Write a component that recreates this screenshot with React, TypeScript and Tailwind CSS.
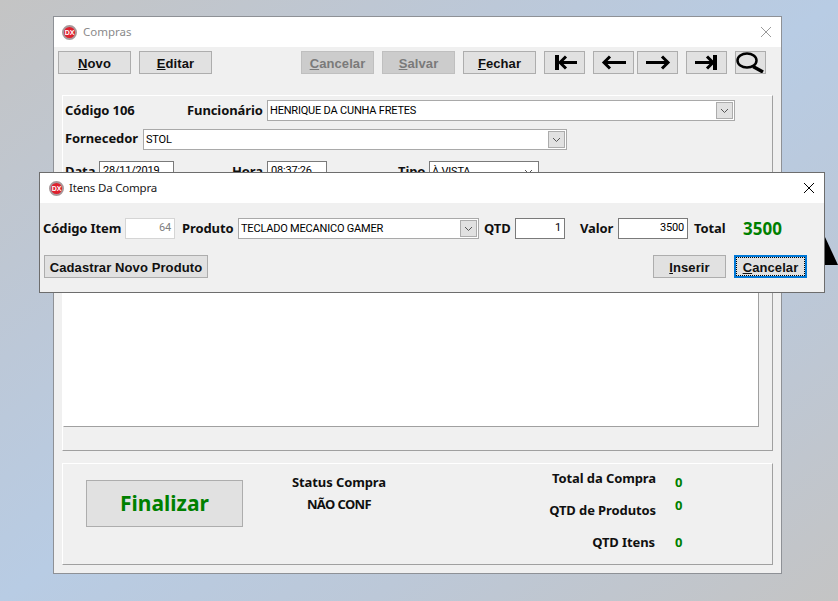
const label = "font-['Noto_Sans',sans-serif] font-bold text-[13px] tracking-[-0.1px] leading-none text-[#101010] whitespace-nowrap";
const field = "font-['Roboto',sans-serif] text-[11px] tracking-[-0.2px] whitespace-nowrap";

function DxIcon() {
  return (
    <span className="flex h-[15px] w-[15px] shrink-0 items-center justify-center rounded-full border-2 border-[#a8989a] bg-[#e0202e] font-['Liberation_Sans',sans-serif] text-[7px] font-bold leading-none text-white">
      DX
    </span>
  );
}

function Btn({ hot, rest, w = "w-[73px]", off = false, focus = false }: { hot: string; rest: string; w?: string; off?: boolean; focus?: boolean }) {
  const look = off
    ? "border border-[#bfbfbf] bg-[#cccccc] text-[#7a7a7a]"
    : focus
      ? "border-2 border-[#0078d7] bg-[#e1e1e1] text-[#101010]"
      : "border border-[#adadad] bg-[#e1e1e1] text-[#101010]";
  return (
    <button className={`relative flex h-[23px] shrink-0 items-center justify-center pt-[2px] font-['Liberation_Sans',sans-serif] text-[13px] font-bold tracking-[0.1px] ${w} ${look}`}>
      {focus && <span className="absolute inset-0 border border-dotted border-black" />}
      <span className="underline">{hot}</span>
      {rest}
    </button>
  );
}

function NavBtn({ w = "w-[41px]", children }: { w?: string; children: React.ReactNode }) {
  return (
    <button className={`flex h-[23px] shrink-0 items-center justify-center border border-[#adadad] bg-[#e1e1e1] ${w}`}>
      {children}
    </button>
  );
}

function ArrowIcon({ d, bar }: { d: string; bar?: number }) {
  return (
    <svg width="39" height="21" viewBox="0 0 39 21" fill="none">
      <path d={d} stroke="#000" strokeWidth="3" strokeLinejoin="miter" />
      {bar !== undefined && <rect x={bar} y="3" width="4" height="15" fill="#000" />}
    </svg>
  );
}

function Combo({ text, w, border = "border-[#a9a9a9]", flat = false }: { text: string; w: string; border?: string; flat?: boolean }) {
  return (
    <div className={`flex h-[21px] shrink-0 items-center justify-between border bg-white pl-[2px] pr-[1px] text-black ${w} ${border} ${field}`}>
      <span className="pt-[2px]">{text}</span>
      <span className={`flex h-[17px] w-[17px] items-center justify-center ${flat ? "" : "border border-[#acacac] bg-[#e1e1e1]"}`}>
        <svg width="9" height="6" viewBox="0 0 9 6" fill="none">
          <path d="M1 1l3.5 3.5L8 1" stroke="#555" strokeWidth="1" />
        </svg>
      </span>
    </div>
  );
}

function Input({ text, w, border = "border-[#7a7a7a]", color = "text-black", left = false }: { text: string; w: string; border?: string; color?: string; left?: boolean }) {
  return (
    <div className={`flex h-[21px] shrink-0 items-center border bg-white px-[3px] ${left ? "justify-start" : "justify-end"} ${w} ${border} ${field} ${color}`}>
      {text}
    </div>
  );
}

export default function App() {
  return (
    <div className="relative h-[601px] w-[838px] overflow-hidden bg-[linear-gradient(to_bottom_right,#c4c4c4_0%,#bcc8d8_30%,#b8cce4_50%,#bcc8d8_72%,#c4c4c4_100%)]">
      {/* black corner of the desktop picture */}
      <svg className="absolute left-[825px] top-[237px]" width="13" height="28" viewBox="0 0 13 28">
        <path d="M0 0L13 28H0z" fill="#000" />
      </svg>

      {/* Compras window */}
      <div className="absolute left-[53px] top-[16px] flex h-[558px] w-[729px] flex-col border border-[#8e9196] bg-[#f0f0f0]">
        <div className="flex h-[30px] shrink-0 items-center bg-white pl-[8px] pr-[9px]">
          <DxIcon />
          <span className="ml-[6px] font-['Noto_Sans',sans-serif] text-[11.5px] text-[#8a8a8a]">Compras</span>
          <svg className="ml-auto" width="12" height="12" viewBox="0 0 12 12" fill="none">
            <path d="M1 1l10 10M11 1L1 11" stroke="#9a9a9a" strokeWidth="1" />
          </svg>
        </div>

        <div className="flex pl-[4px] pt-[4px]">
          <Btn hot="N" rest="ovo" />
          <div className="ml-[8px]"><Btn hot="E" rest="ditar" /></div>
          <div className="ml-[89px]"><Btn hot="C" rest="ancelar" off /></div>
          <div className="ml-[8px]"><Btn hot="S" rest="alvar" off /></div>
          <div className="ml-[8px]"><Btn hot="F" rest="echar" /></div>
          <div className="ml-[8px]">
            <NavBtn><ArrowIcon bar={10} d="M32 10.5H16M21 4.5l-6 6 6 6" /></NavBtn>
          </div>
          <div className="ml-[8px]">
            <NavBtn><ArrowIcon d="M32 10.5H10M16 4.5l-6 6 6 6" /></NavBtn>
          </div>
          <div className="ml-[3px]">
            <NavBtn><ArrowIcon d="M8 10.5h22M24 4.5l6 6-6 6" /></NavBtn>
          </div>
          <div className="ml-[8px]">
            <NavBtn><ArrowIcon bar={26} d="M8 10.5h18M20 4.5l6 6-6 6" /></NavBtn>
          </div>
          <div className="ml-[8px]">
            <NavBtn w="w-[31px]">
              <svg width="29" height="21" viewBox="0 0 29 21" fill="none">
                <ellipse cx="11" cy="8.5" rx="9.5" ry="7" stroke="#000" strokeWidth="2.5" />
                <path d="M17 14.5l10 5.5" stroke="#000" strokeWidth="3.5" />
              </svg>
            </NavBtn>
          </div>
        </div>

        {/* Dados da compra */}
        <div className="ml-[8px] mt-[21px] flex h-[356px] w-[711px] flex-col border border-b-[#a0a0a0] border-l-white border-r-[#a0a0a0] border-t-white pt-[4px]">
          <div className="flex h-[21px] items-center pl-[2px]">
            <span className={`${label} w-[122px]`}>Código 106</span>
            <span className={`${label} w-[80px]`}>Funcionário</span>
            <Combo text="HENRIQUE DA CUNHA FRETES" w="w-[468px]" />
          </div>
          <div className="mt-[8px] flex h-[21px] items-center pl-[2px]">
            <span className={`${label} w-[78px] pb-[2px]`}>Fornecedor</span>
            <Combo text="STOL" w="w-[424px]" />
          </div>
          <div className="mt-[11px] flex h-[21px] items-center pl-[2px]">
            <span className={`${label} w-[34px]`}>Data</span>
            <Input text="28/11/2019" w="w-[75px]" left />
            <span className={`${label} ml-[58px] w-[35px]`}>Hora</span>
            <Input text="08:37:26" w="w-[60px]" left />
            <span className={`${label} ml-[71px] w-[31px]`}>Tipo</span>
            <Combo text="À VISTA" w="w-[110px]" border="border-[#7a7a7a]" flat />
          </div>
          <div className="mt-[8px] h-[237px] w-[696px] border border-b-[#a0a0a0] border-l-white border-r-[#a0a0a0] border-t-[#a0a0a0] bg-white" />
        </div>

        {/* Totais */}
        <div className="ml-[8px] mt-[12px] grid h-[102px] w-[711px] grid-cols-[181px_187px_225px_1fr] border border-b-[#a0a0a0] border-l-white border-r-[#a0a0a0] border-t-white">
          <div className="pl-[23px] pt-[16px]">
            <button className="h-[47px] w-[157px] border border-[#adadad] bg-[#e1e1e1] pt-[1px] font-['Noto_Sans',sans-serif] text-[21px] font-bold text-[#008000]">
              Finalizar
            </button>
          </div>
          <div className="flex flex-col items-center pl-[3px] pt-[12px]">
            <span className={label}>Status Compra</span>
            <span className={`${label} mt-[9px] text-[12px] tracking-[-0.6px]`}>NÃO CONF</span>
          </div>
          <div className="flex flex-col items-end pt-[8px]">
            <span className={label}>Total da Compra</span>
            <span className={`${label} mt-[19px]`}>QTD de Produtos</span>
            <span className={`${label} mt-[19px] pr-[1px]`}>QTD Itens</span>
          </div>
          <div className="flex flex-col pl-[19px] pt-[12px] font-['Noto_Sans',sans-serif] text-[13px] font-bold leading-none text-[#008000]">
            <span>0</span>
            <span className="mt-[10px]">0</span>
            <span className="mt-[24px]">0</span>
          </div>
        </div>
      </div>

      {/* Itens Da Compra dialog */}
      <div className="absolute left-[39px] top-[172px] flex h-[121px] w-[786px] flex-col border border-[#6d6d6d] bg-[#f0f0f0]">
        <div className="flex h-[30px] shrink-0 items-center bg-white pl-[9px] pr-[9px]">
          <DxIcon />
          <span className="ml-[5px] font-['Noto_Sans',sans-serif] text-[11.5px] tracking-[-0.2px] text-[#202020]">Itens Da Compra</span>
          <svg className="ml-auto" width="12" height="12" viewBox="0 0 12 12" fill="none">
            <path d="M1 1l10 10M11 1L1 11" stroke="#000" strokeWidth="1" />
          </svg>
        </div>
        <div className="mt-[15px] flex h-[21px] items-center pl-[3px]">
          <span className={`${label} w-[82px]`}>Código Item</span>
          <Input text="64" w="w-[50px]" border="border-[#d5d5d5]" color="text-[#808080]" />
          <span className={`${label} ml-[7px] w-[56px]`}>Produto</span>
          <Combo text="TECLADO MECANICO GAMER" w="w-[241px]" />
          <span className={`${label} ml-[5px] w-[31px]`}>QTD</span>
          <Input text="1" w="w-[50px]" />
          <span className={`${label} ml-[15px] w-[38px]`}>Valor</span>
          <Input text="3500" w="w-[70px]" />
          <span className={`${label} ml-[6px] w-[49px]`}>Total</span>
          <span className="font-['Noto_Sans',sans-serif] text-[17px] font-bold leading-none text-[#008000]">3500</span>
        </div>
        <div className="mt-[16px] flex pl-[4px] pr-[17px]">
          <Btn hot="" rest="Cadastrar Novo Produto" w="w-[164px]" />
          <div className="ml-auto"><Btn hot="I" rest="nserir" /></div>
          <div className="ml-[8px]"><Btn hot="C" rest="ancelar" focus /></div>
        </div>
      </div>
    </div>
  );
}
